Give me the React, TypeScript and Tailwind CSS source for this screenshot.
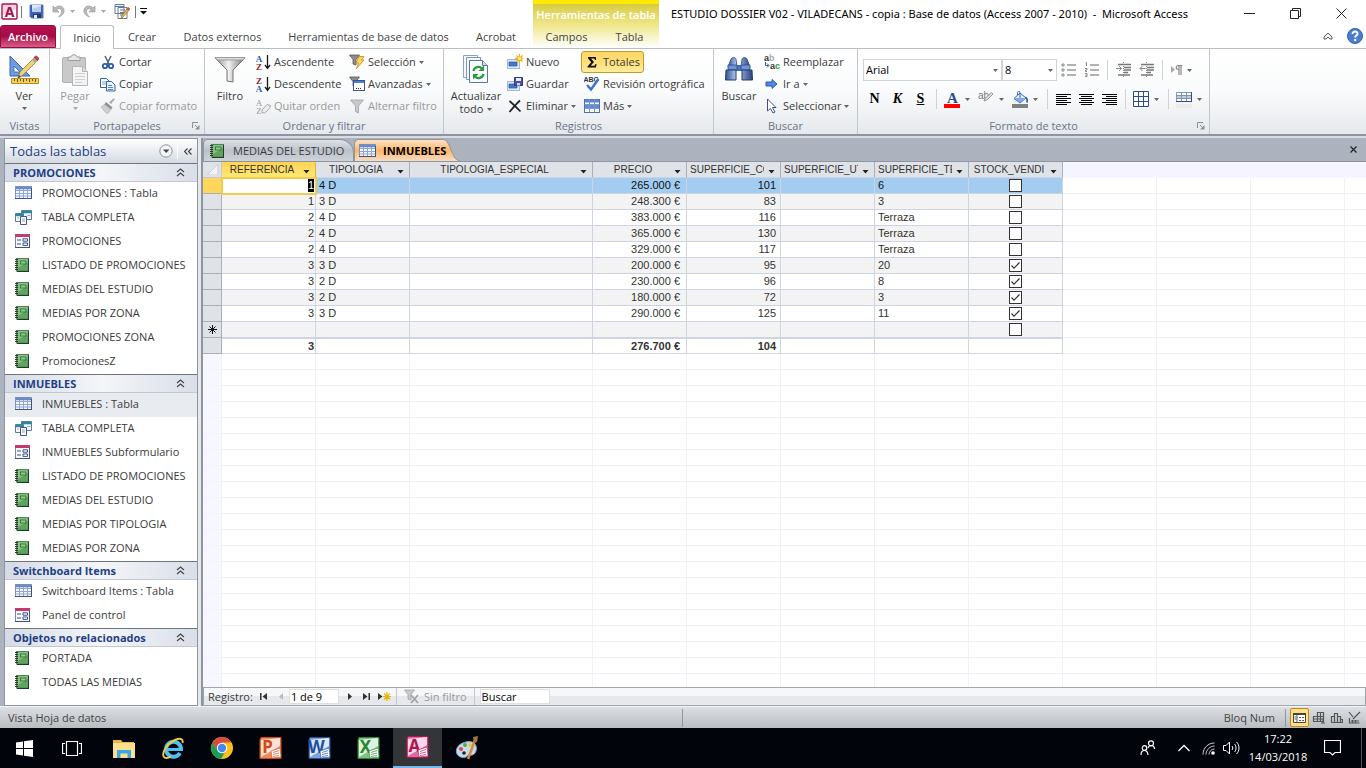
import type { ReactNode } from 'react';
import clsx from 'clsx';

type NavKind = 'table' | 'query' | 'form' | 'report';

interface NavGroup {
  title: string;
  items: { label: string; kind: NavKind; active?: boolean }[];
}

const navGroups: NavGroup[] = [
  {
    title: 'PROMOCIONES',
    items: [
      { label: 'PROMOCIONES : Tabla', kind: 'table' },
      { label: 'TABLA COMPLETA', kind: 'query' },
      { label: 'PROMOCIONES', kind: 'form' },
      { label: 'LISTADO DE PROMOCIONES', kind: 'report' },
      { label: 'MEDIAS DEL ESTUDIO', kind: 'report' },
      { label: 'MEDIAS POR ZONA', kind: 'report' },
      { label: 'PROMOCIONES ZONA', kind: 'report' },
      { label: 'PromocionesZ', kind: 'report' },
    ],
  },
  {
    title: 'INMUEBLES',
    items: [
      { label: 'INMUEBLES : Tabla', kind: 'table', active: true },
      { label: 'TABLA COMPLETA', kind: 'query' },
      { label: 'INMUEBLES Subformulario', kind: 'form' },
      { label: 'LISTADO DE PROMOCIONES', kind: 'report' },
      { label: 'MEDIAS DEL ESTUDIO', kind: 'report' },
      { label: 'MEDIAS POR TIPOLOGIA', kind: 'report' },
      { label: 'MEDIAS POR ZONA', kind: 'report' },
    ],
  },
  {
    title: 'Switchboard Items',
    items: [
      { label: 'Switchboard Items : Tabla', kind: 'table' },
      { label: 'Panel de control', kind: 'form' },
    ],
  },
  {
    title: 'Objetos no relacionados',
    items: [
      { label: 'PORTADA', kind: 'report' },
      { label: 'TODAS LAS MEDIAS', kind: 'report' },
    ],
  },
];

const columns = [
  'REFERENCIA',
  'TIPOLOGIA',
  'TIPOLOGIA_ESPECIAL',
  'PRECIO',
  'SUPERFICIE_CO',
  'SUPERFICIE_UT',
  'SUPERFICIE_TE',
  'STOCK_VENDI',
];

const rows = [
  { ref: '1', tipo: '4 D', precio: '265.000 €', sup: '101', terraza: '6', vendido: false },
  { ref: '1', tipo: '3 D', precio: '248.300 €', sup: '83', terraza: '3', vendido: false },
  { ref: '2', tipo: '4 D', precio: '383.000 €', sup: '116', terraza: 'Terraza', vendido: false },
  { ref: '2', tipo: '4 D', precio: '365.000 €', sup: '130', terraza: 'Terraza', vendido: false },
  { ref: '2', tipo: '4 D', precio: '329.000 €', sup: '117', terraza: 'Terraza', vendido: false },
  { ref: '3', tipo: '3 D', precio: '200.000 €', sup: '95', terraza: '20', vendido: true },
  { ref: '3', tipo: '2 D', precio: '230.000 €', sup: '96', terraza: '8', vendido: true },
  { ref: '3', tipo: '2 D', precio: '180.000 €', sup: '72', terraza: '3', vendido: true },
  { ref: '3', tipo: '3 D', precio: '290.000 €', sup: '125', terraza: '11', vendido: true },
];

/* ---------- icons ---------- */

interface SvgProps {
  w?: number;
  h?: number;
  box?: string;
  className?: string;
  children: ReactNode;
}

const Svg = ({ w = 16, h = 16, box, className, children }: SvgProps) => (
  <svg width={w} height={h} viewBox={box ?? `0 0 ${w} ${h}`} className={clsx('shrink-0', className)} aria-hidden="true">
    {children}
  </svg>
);

const Caret = ({ className = 'fill-[#666]' }: { className?: string }) => (
  <Svg w={5} h={3} className={className}>
    <path d="M0 0h5L2.5 3z" />
  </Svg>
);

const AccessIcon = () => (
  <Svg w={17} h={17}>
    <rect x="1" y="1" width="15" height="15" rx="1" fill="#fff" stroke="#a4104b" strokeWidth="1.4" />
    <path d="M2 2h13v4L2 12z" fill="#f3d3df" />
    <text x="8.5" y="14" fontSize="14" fontWeight="700" textAnchor="middle" fill="#a4104b" fontFamily="Noto Sans, sans-serif">A</text>
  </Svg>
);

const SaveIcon = () => (
  <Svg w={15} h={15}>
    <path d="M1 1h13v13H2.500L1 12.500z" fill="#3f5fb4" stroke="#5a78c4" />
    <path d="M3 1h9v7H3z" fill="#dfe7f8" />
    <path d="M3 5l9-3v6H3z" fill="#b9cbef" />
    <path d="M4 10h8v4H4z" fill="#25386e" />
    <path d="M5 11h3v3H5z" fill="#e9edf7" />
  </Svg>
);

const UndoIcon = ({ flip }: { flip?: boolean }) => (
  <Svg w={13} h={13} className={flip ? '-scale-x-100' : undefined}>
    <path d="M1 1v6h6L4.800 4.800C7 2.500 10 4 9.500 7 9.200 9 8 10.500 6.500 12c4-1.500 6-4 5.500-7.200C11.400.8 6.500-.5 3 3z" fill="#b9b9b9" stroke="#9b9b9b" strokeWidth=".7" />
  </Svg>
);

const FormEditIcon = () => (
  <Svg w={17} h={16}>
    <path d="M1 .5h9v9H1zM4 3.500h9v11H4z" fill="#fff" stroke="#6b7a95" />
    <path d="M1 2.500h9M6 6h5M6 8.500h5M6 11h3" stroke="#5674ad" />
    <path d="M16 5l-7 8-2 2 .5-3 6.500-8.500z" fill="#eeb54a" stroke="#9b6a18" strokeWidth=".7" />
    <path d="M14 3.500L16 5l-1.500 1.700-2-1.600z" fill="#c75050" />
  </Svg>
);

const ViewIcon = () => (
  <Svg w={32} h={30}>
    <path d="M2 1v20h20z" fill="#6f9be0" stroke="#3765b8" />
    <path d="M6 11v6h6z" fill="#fff" stroke="#3765b8" strokeWidth=".8" />
    <path d="M27 2l3 3-15 15-5 3 2-6z" fill="#f3d277" stroke="#8a7748" strokeWidth=".8" />
    <path d="M11 20l2 2-3 1z" fill="#444" />
    <path d="M26 2.500l3.500 3.200 1-1.300c.8-1.300-1.900-4-3.200-3.200z" fill="#c4452e" stroke="#87301f" strokeWidth=".6" />
    <path d="M24 4.800l3.200 3.200 1.800-2-3.200-3z" fill="#9aa" />
    <path d="M3.500 23.500h27v5h-27z" fill="#f6cf58" stroke="#b98b1a" />
    <path d="M6.500 24v2m3-2v3m3-3v2m3-2v3m3-3v2m3-2v3m3-3v2m3-2v3" stroke="#6e5413" />
  </Svg>
);

const PasteIcon = () => (
  <Svg w={28} h={32}>
    <rect x="1.500" y="3.500" width="23" height="25" rx="1.500" fill="#c9c9c9" stroke="#b0b0b0" />
    <path d="M7 6.500V3h3c0-3 6-3 6 0h3v3.500z" fill="#e6e6e6" stroke="#9c9c9c" />
    <path d="M11.500 12.500h10l5 5v14h-15z" fill="#f4f4f6" stroke="#b5b5b8" />
    <path d="M21.500 12.500v5h5" fill="#ddd" stroke="#b5b5b8" />
    <path d="M14 19.500h10M14 22.500h10M14 25.500h10M14 28.500h7" stroke="#cfcfd3" />
  </Svg>
);

const CutIcon = () => (
  <Svg>
    <path d="M5 2l4.500 9M11 2L6.500 11" stroke="#52607b" strokeWidth="1.500" />
    <circle cx="5" cy="12" r="2.200" fill="none" stroke="#2b5caa" strokeWidth="1.800" />
    <circle cx="11" cy="12" r="2.200" fill="none" stroke="#2b5caa" strokeWidth="1.800" />
  </Svg>
);

const CopyIcon = () => (
  <Svg>
    <path d="M.5 2.500h6l3 3v6h-9z" fill="#fff" stroke="#2f63ac" />
    <path d="M2 6h4M2 8h4" stroke="#7ba2d8" />
    <path d="M6.500 5.500h5l3.500 3.500v6H6.500z" fill="#eaf2fd" stroke="#2f63ac" />
    <path d="M8 9.500h4M8 11.500h5M8 13.500h5" stroke="#5686c9" />
  </Svg>
);

const BrushIcon = () => (
  <Svg>
    <path d="M15 1l-4 5-2-1.500L13.500.5z" fill="#a9a9a9" />
    <path d="M6 4l6.500 5.500-2 2.500-6.500-5z" fill="#8f8f8f" />
    <path d="M4.500 6.500l6.500 5-3 4-2.500-1L1 9z" fill="#cfcfcf" stroke="#b1b1b1" strokeWidth=".7" />
  </Svg>
);

const FunnelBig = () => (
  <Svg w={32} h={28}>
    <defs>
      <linearGradient id="funnel" x1="0" x2="1">
        <stop offset="0" stopColor="#8b8b8b" />
        <stop offset=".45" stopColor="#f1f1f1" />
        <stop offset="1" stopColor="#777" />
      </linearGradient>
    </defs>
    <path d="M1 2h30L19 14v12l-6-1V14z" fill="url(#funnel)" stroke="#727272" />
    <path d="M1 1.500h30L29 4H3z" fill="#d9d9d9" stroke="#8b8b8b" strokeWidth=".7" />
  </Svg>
);

const SortIcon = ({ top, bottom }: { top: string; bottom: string }) => (
  <Svg>
    <text x="4" y="7.500" fontSize="9" fontWeight="700" textAnchor="middle" fill={top === 'A' ? '#2b5caa' : '#8b2a2a'} fontFamily="Liberation Serif, serif">{top}</text>
    <text x="4" y="15.500" fontSize="9" fontWeight="700" textAnchor="middle" fill={bottom === 'A' ? '#2b5caa' : '#8b2a2a'} fontFamily="Liberation Serif, serif">{bottom}</text>
    <path d="M12.500 1v13M10 11l2.500 3.500L15 11" fill="none" stroke="#1b1b1b" strokeWidth="1.300" />
  </Svg>
);

const ClearSortIcon = () => (
  <Svg>
    <text x="4" y="7.500" fontSize="9" textAnchor="middle" fill="#999" fontFamily="Liberation Serif, serif">A</text>
    <text x="4" y="15.500" fontSize="9" textAnchor="middle" fill="#999" fontFamily="Liberation Serif, serif">Z</text>
    <path d="M7 12l5-5.500 3.500 1-1 3-5 4.500-2.500-.5z" fill="#eee" stroke="#a6a6a6" />
  </Svg>
);

const Funnel = ({ extra, light }: { extra?: 'bolt' | 'form' | 'x'; light?: boolean }) => (
  <Svg>
    <path
      d={extra ? 'M.5 1h10L7 5.500V11l-3-1V5.500z' : 'M1.500 2h13L9.500 8v7l-3-1.500V8z'}
      fill={light ? '#c9c9c9' : '#8d8d8d'}
      stroke={light ? '#a3a3a3' : '#555'}
      strokeWidth=".8"
    />
    {extra === 'bolt' && <path d="M10 2.500h5L12.500 6H15l-7.500 8.500 2-5.500H7z" fill="#ffd45a" stroke="#c08a1a" strokeWidth=".8" />}
    {extra === 'form' && (
      <g>
        <rect x="4.500" y="4.500" width="11" height="10" fill="#fff" stroke="#39598f" />
        <path d="M5 6h10" stroke="#4c7fcf" strokeWidth="2" />
        <path d="M7 12.500h1m1 0h1m1 0h1" stroke="#333" />
      </g>
    )}
    {extra === 'x' && <path d="M7 6l7 8M14 6l-7 8" stroke="#a3a3a3" strokeWidth="1.800" />}
  </Svg>
);

const RefreshAllIcon = () => (
  <Svg w={28} h={32}>
    <path d="M1.500 1.500h14v22h-14z" fill="#f4f8fd" stroke="#8ba3c4" />
    <path d="M4.500 3.500h14v22h-14z" fill="#f4f8fd" stroke="#7f98bb" />
    <path d="M7.500 6.500h13l5 5v17h-18z" fill="#f7fafe" stroke="#5c7799" />
    <path d="M20.500 6.500v5h5" fill="#cfdcec" stroke="#5c7799" />
    <path d="M11.500 17c.5-4 6-5.500 8.500-2.500M21.500 20c-.5 4-6 5.500-8.500 2.500" fill="none" stroke="#2f9a3f" strokeWidth="2.200" />
    <path d="M22 11.500v5.500h-5.500zM11 25.500V20h5.500z" fill="#2f9a3f" />
  </Svg>
);

const RecordIcon = ({ kind }: { kind: 'new' | 'save' }) => (
  <Svg>
    <rect x=".5" y="5.500" width="12" height="9" fill="#dfe9f7" stroke="#a5b7d3" />
    <path d="M2 8h8v4H2z" fill="#3f7bd0" stroke="#27549b" strokeWidth=".7" />
    {kind === 'new' && (
      <g stroke="#f0b400" strokeWidth="1.300">
        <path d="M12.500 0v9M8 4.500h8M9.500 1.500l6 6M15.500 1.500l-6 6" />
        <circle cx="12.500" cy="4.500" r="1.500" fill="#fff6b0" stroke="none" />
      </g>
    )}
    {kind === 'save' && (
      <g>
        <path d="M7.500 1.500h8v8h-8z" fill="#4a54a8" stroke="#32397f" />
        <path d="M9 2h5v3H9z" fill="#e8edf9" />
        <path d="M10 7h3v2.500h-3z" fill="#d5d8ea" />
      </g>
    )}
  </Svg>
);

const DeleteIcon = () => (
  <Svg>
    <path d="M2.500 3C6 6 10 10 13.500 13.500M13 2.500C9 6 6 10 2.500 14" fill="none" stroke="#222" strokeWidth="1.700" />
  </Svg>
);

const SigmaIcon = () => (
  <Svg>
    <path d="M4 3h8v3h-1l-.8-1.500H7L10 8l-3.300 3.800h3.800L11.500 10h1l-.5 3.500H3.500v-1L7.200 8.300 4 4.200z" fill="#111" />
  </Svg>
);

const SpellIcon = () => (
  <Svg>
    <text x="7" y="6" fontSize="7" fontWeight="700" textAnchor="middle" fill="#333" fontFamily="Liberation Sans, sans-serif">ABC</text>
    <path d="M3 9l4 4.500L14.500 3" fill="none" stroke="#3c74cf" strokeWidth="2.400" />
  </Svg>
);

const MoreIcon = () => (
  <Svg>
    <rect x=".5" y="1.500" width="15" height="13" fill="#fff" stroke="#4d6ea8" />
    <path d="M1 3h14" stroke="#5a86cf" strokeWidth="3" />
    <path d="M1 8.500h14" stroke="#5a8fe0" strokeWidth="4" />
    <path d="M.5 6.500h15M.5 10.500h15M5.500 1.500v13M10.500 1.500v13" stroke="#7c97c4" />
  </Svg>
);

const BinocularsIcon = () => (
  <Svg w={30} h={28}>
    <defs>
      <linearGradient id="bino" x1="0" x2="1">
        <stop offset="0" stopColor="#2f4f8f" />
        <stop offset=".4" stopColor="#b9cdf0" />
        <stop offset="1" stopColor="#27427c" />
      </linearGradient>
    </defs>
    <path d="M7 3c1-2 4-2 5 0l1 8H4zM18 3c1-2 4-2 5 0l3 8h-9z" fill="url(#bino)" stroke="#2d4a85" strokeWidth=".8" />
    <path d="M12 9h6v6h-6z" fill="#4a6fb5" />
    <path d="M4 9h9v5H4zM17 9h9v5h-9z" fill="#6f93d6" stroke="#2d4a85" strokeWidth=".8" />
    <path d="M2 14h10v10H1.500zM18 14h10l.5 10H18z" fill="url(#bino)" stroke="#233c70" />
  </Svg>
);

const ReplaceIcon = () => (
  <Svg>
    <text x="0" y="7" fontSize="9" fontWeight="700" fill="#333" fontFamily="Liberation Sans, sans-serif">a<tspan fill="#aaa">b</tspan></text>
    <text x="6" y="14.500" fontSize="9" fontWeight="700" fill="#333" fontFamily="Liberation Sans, sans-serif">a<tspan fill="#2b9a2b">c</tspan></text>
    <path d="M1.500 8v3.500h3M3 9.500l2 2-2 2" fill="none" stroke="#2b5caa" />
  </Svg>
);

const ArrowIcon = () => (
  <Svg>
    <path d="M2 6h6V3.500l5 4.500-5 4.500V10H2z" fill="#4f88e6" stroke="#2c5cab" />
  </Svg>
);

const PointerIcon = () => (
  <Svg>
    <path d="M3.500 1v12l3-2.500L9 15l2-1-2.500-4.500H12z" fill="#fff" stroke="#3c5384" />
  </Svg>
);

const ListIcon = ({ numbered }: { numbered?: boolean }) => (
  <Svg>
    <path d="M6 3h9M6 8h9M6 13h9" stroke="#999" strokeWidth="1.300" />
    {numbered ? (
      <path d="M1.500 1l1-.5V4M1 6.500h2v1.500H1.500V9.500H3M1 11.500h2v3H1M1.500 13H3" fill="none" stroke="#8a8a8a" />
    ) : (
      <path d="M1 2h2v2H1zM1 7h2v2H1zM1 12h2v2H1z" fill="#fff" stroke="#8a8a8a" />
    )}
  </Svg>
);

const IndentIcon = ({ out }: { out?: boolean }) => (
  <Svg>
    <path d="M2 2.500h13M8 5.500h7M8 8h7M8 10.500h4M2 13h12" stroke="#777" strokeWidth="1.300" />
    <path d={out ? 'M6.500 6.500H1M3.500 4L1 6.500 3.500 9' : 'M0 6.500h5.500M3 4l2.500 2.500L3 9'} fill="none" stroke="#888" />
    <path d="M7.500 0v15" stroke="#888" strokeDasharray="1 1" />
  </Svg>
);

const PilcrowIcon = () => (
  <Svg w={13} h={14}>
    <path d="M1 3l4 3.500L1 10z" fill="#aaa" />
    <path d="M12.500 2.500H8.500c-3 0-3 4 0 4M9 3v9M11 3v9" fill="none" stroke="#888" strokeWidth="1.200" />
  </Svg>
);

const AlignIcon = ({ d }: { d: string }) => (
  <Svg w={15} h={13}>
    <path d={d} stroke="#000" strokeWidth="1" />
  </Svg>
);

const FontColorIcon = () => (
  <Svg w={17} h={17}>
    <text x="8.500" y="11.500" fontSize="15" fontWeight="700" textAnchor="middle" fill="#2c4d8b" fontFamily="Liberation Serif, serif">A</text>
    <path d="M0 13h16v4H0z" fill="#f00" />
  </Svg>
);

const HighlightIcon = () => (
  <Svg w={17} h={17}>
    <text x="0" y="8" fontSize="10" fontWeight="400" fill="#777" fontFamily="Liberation Sans, sans-serif">ab</text>
    <path d="M15 3l-6 6-3 1 1-2.500 6.500-6z" fill="#ddd" stroke="#999" />
  </Svg>
);

const FillIcon = () => (
  <Svg w={17} h={17}>
    <path d="M8 2l6 5-6 5-6-4.500z" fill="#e3edfb" stroke="#3a67ab" />
    <path d="M4 7h9l-5 4.500-5-4z" fill="#7fa8e6" />
    <path d="M8 7V1.500c0-1.500-2.500-1.500-2.500 0V4" fill="none" stroke="#3a67ab" />
    <path d="M13.500 6c2 2 2 4 1.200 5.500" fill="none" stroke="#2b5caa" strokeWidth="1.600" />
    <path d="M0 13h16v4H0z" fill="#808080" />
  </Svg>
);

const GridIcon = () => (
  <Svg w={17} h={17}>
    <path d="M.5.5h15v15H.5zM.5 5.500h15M.5 10.500h15M5.500.5v15M10.500.5v15" fill="#fff" stroke="#2c4d8b" />
  </Svg>
);

const AltRowIcon = () => (
  <Svg w={17} h={17}>
    <path d="M.5 1.500h15v9H.5z" fill="#fff" stroke="#8195b3" />
    <path d="M1 4.500h14v3H1z" fill="#c5cbd5" />
    <path d="M.5 4.500h15M.5 7.500h15M5.500 1.500v9M10.500 1.500v9" stroke="#8195b3" />
    <path d="M15.500 1v10M0 10.500h16" stroke="#2c4d8b" />
    <path d="M0 13h16v4H0z" fill="#ececec" />
  </Svg>
);

const TableIcon = () => (
  <Svg w={17} h={14}>
    <rect x=".5" y=".5" width="16" height="12" fill="#f4f7fd" stroke="#7e91b6" />
    <path d="M1 2h15" stroke="#6c8ac8" strokeWidth="2.500" />
    <path d="M1 4.500h15M1 7.500h15M1 10h15M4.500 3v9.500M8.500 3v9.500M12.500 3v9.500" stroke="#93a7cc" />
    <path d="M0 12.500h17M16.500 2v11" stroke="#3c5384" />
  </Svg>
);

const QueryIcon = () => (
  <Svg w={17} h={15}>
    <path d="M6.500.5h10v9h-10z" fill="#eef5fb" stroke="#5f7ba0" />
    <path d="M6.500 2h10" stroke="#2b8a93" strokeWidth="2.500" />
    <path d="M.5 3.500h8v8h-8z" fill="#fff" stroke="#5f7ba0" />
    <path d="M.5 5h8" stroke="#2b8a93" strokeWidth="2.500" />
    <path d="M5.500 6.500h6v8h-6z" fill="#fff" stroke="#41597f" />
    <path d="M7 9h3M7 11h3M2 8h2M12.500 5.500h3" stroke="#8ba2c6" />
  </Svg>
);

const FormIcon = () => (
  <Svg w={16} h={15}>
    <rect x=".5" y=".5" width="14" height="13" fill="#f6f8fd" stroke="#7484ad" />
    <path d="M0 1.500h15" stroke="#c43b6b" strokeWidth="3" />
    <path d="M2 6h4M2 10h4" stroke="#3c5384" strokeWidth="1.200" />
    <path d="M8 4.800h4.500v2.400H8zM8 9h4.500v2.400H8z" fill="#fff" stroke="#3c5384" />
    <path d="M0 13.500h15M14.500 3v11" stroke="#3c5384" />
  </Svg>
);

const ReportIcon = () => (
  <Svg w={14} h={14}>
    <rect x="1.500" y=".5" width="12" height="12.500" fill="#5fa35e" stroke="#4c8550" />
    <path d="M3 1h10v3L3 10z" fill="#86c083" />
    <rect x="5.500" y="3" width="5.500" height="3" fill="#8fcb8a" stroke="#2d6a37" strokeWidth=".8" />
    <path d="M0 1.500h3M0 3.500h3M0 5.500h3M0 7.500h3M0 9.500h3M0 11.500h3" stroke="#333" />
    <path d="M2 13.500h12M13.500 1v13" stroke="#1f3d26" />
  </Svg>
);

const navIcons: Record<NavKind, ReactNode> = {
  table: <TableIcon />,
  query: <QueryIcon />,
  form: <FormIcon />,
  report: <ReportIcon />,
};

/* ---------- ribbon ---------- */

interface RibbonButtonProps {
  icon: ReactNode;
  label: string;
  caret?: boolean;
  disabled?: boolean;
  active?: boolean;
}

const RibbonButton = ({ icon, label, caret, disabled, active }: RibbonButtonProps) => (
  <button
    type="button"
    disabled={disabled}
    className={clsx(
      'flex h-[22px] items-center gap-[3px] rounded-[3px] border px-[2px] whitespace-nowrap',
      active ? 'border-[#c29b29] bg-linear-to-b from-[#ffd666] via-[#ffdf78] to-[#ffec9c] pr-[3px]' : 'border-transparent',
      disabled ? 'text-[#9a9a9a]' : 'text-[#3b3b3b]'
    )}
  >
    {icon}
    <span>{label}</span>
    {caret && <Caret />}
  </button>
);

const BigButton = ({ icon, children, disabled, width = 'w-11' }: { icon: ReactNode; children: ReactNode; disabled?: boolean; width?: string }) => (
  <button
    type="button"
    disabled={disabled}
    className={clsx('flex h-[66px] shrink-0 flex-col items-center', width, disabled ? 'text-[#9a9a9a]' : 'text-[#3b3b3b]')}
  >
    <span className="flex h-[38px] items-center">{icon}</span>
    {children}
  </button>
);

const Launcher = () => (
  <Svg w={8} h={8} className="absolute right-1 bottom-1">
    <path d="M.5 6V.5H6" fill="none" stroke="#8a8f98" />
    <path d="M3 3l3 3" stroke="#8a8f98" />
    <path d="M7.500 3v4.500H3z" fill="#8a8f98" />
  </Svg>
);

const Group = ({ title, width, launcher, children }: { title: string; width: string; launcher?: boolean; children: ReactNode }) => (
  <section className={clsx('relative flex shrink-0 flex-col border-r border-[#c3c7cd]', width)} aria-label={title}>
    <div className="flex h-[69px] items-start pt-[2px]">{children}</div>
    <div className="text-center leading-4 text-[#6b7486]">{title}</div>
    {launcher && <Launcher />}
  </section>
);

const ToolSep = () => <span className="mx-1 h-5 w-px bg-[#cfd3d8]" />;

const ToolButton = ({ label, children, caret }: { label: string; children: ReactNode; caret?: boolean }) => (
  <button
    type="button"
    aria-label={label}
    className={clsx('flex h-[22px] items-center', caret ? 'w-[34px] gap-1 pl-[3px]' : 'w-[23px] justify-center')}
  >
    {children}
    {caret && <Caret />}
  </button>
);

const Combo = ({ label, value, width }: { label: string; value: string; width: string }) => (
  <div className={clsx('relative flex h-[22px] items-center', width)}>
    <select
      aria-label={label}
      defaultValue={value}
      className="h-full w-full appearance-none border border-[#d0d3d9] bg-white pl-[2px] text-black"
    >
      <option>{value}</option>
    </select>
    <span className="pointer-events-none absolute right-1">
      <Caret />
    </span>
  </div>
);

const Ribbon = () => (
  <div className="flex h-[88px] shrink-0 border-t border-b-2 border-t-[#b9bfc7] border-b-[#8e959e] bg-linear-to-b from-white via-[#fafbfc] to-[#e5e8ec]">
    <Group title="Vistas" width="w-[50px]">
      <BigButton icon={<ViewIcon />} width="w-12">
        <span className="leading-[14px]">Ver</span>
        <Caret className="mt-1 fill-[#666]" />
      </BigButton>
    </Group>
    <Group title="Portapapeles" width="w-[155px]" launcher>
      <div className="flex pl-[3px]">
        <BigButton icon={<PasteIcon />} disabled>
          <span className="leading-[14px]">Pegar</span>
          <Caret className="mt-1 fill-[#aaa]" />
        </BigButton>
        <div className="flex flex-col items-start">
          <RibbonButton icon={<CutIcon />} label="Cortar" />
          <RibbonButton icon={<CopyIcon />} label="Copiar" />
          <RibbonButton icon={<BrushIcon />} label="Copiar formato" disabled />
        </div>
      </div>
    </Group>
    <Group title="Ordenar y filtrar" width="w-[239px]">
      <div className="flex pl-[3px]">
        <BigButton icon={<FunnelBig />}>
          <span className="leading-[14px]">Filtro</span>
        </BigButton>
        <div className="flex w-[94px] flex-col items-start">
          <RibbonButton icon={<SortIcon top="A" bottom="Z" />} label="Ascendente" />
          <RibbonButton icon={<SortIcon top="Z" bottom="A" />} label="Descendente" />
          <RibbonButton icon={<ClearSortIcon />} label="Quitar orden" disabled />
        </div>
        <div className="flex flex-col items-start">
          <RibbonButton icon={<Funnel extra="bolt" />} label="Selección" caret />
          <RibbonButton icon={<Funnel extra="form" />} label="Avanzadas" caret />
          <RibbonButton icon={<Funnel light />} label="Alternar filtro" disabled />
        </div>
      </div>
    </Group>
    <Group title="Registros" width="w-[270px]">
      <div className="flex pl-1">
        <BigButton icon={<RefreshAllIcon />} width="w-14">
          <span className="leading-[14px]">Actualizar</span>
          <span className="flex items-center gap-1 leading-3">
            todo <Caret />
          </span>
        </BigButton>
        <div className="flex w-[77px] flex-col items-start">
          <RibbonButton icon={<RecordIcon kind="new" />} label="Nuevo" />
          <RibbonButton icon={<RecordIcon kind="save" />} label="Guardar" />
          <RibbonButton icon={<DeleteIcon />} label="Eliminar" caret />
        </div>
        <div className="flex flex-col items-start">
          <RibbonButton icon={<SigmaIcon />} label="Totales" active />
          <RibbonButton icon={<SpellIcon />} label="Revisión ortográfica" />
          <RibbonButton icon={<MoreIcon />} label="Más" caret />
        </div>
      </div>
    </Group>
    <Group title="Buscar" width="w-[144px]">
      <div className="flex pl-[3px]">
        <BigButton icon={<BinocularsIcon />}>
          <span className="leading-[14px]">Buscar</span>
        </BigButton>
        <div className="flex flex-col items-start">
          <RibbonButton icon={<ReplaceIcon />} label="Reemplazar" />
          <RibbonButton icon={<ArrowIcon />} label="Ir a" caret />
          <RibbonButton icon={<PointerIcon />} label="Seleccionar" caret />
        </div>
      </div>
    </Group>
    <Group title="Formato de texto" width="w-[352px]" launcher>
      <div className="flex flex-col gap-[7px] pt-2 pl-[5px]">
        <div className="flex items-center">
          <Combo label="Fuente" value="Arial" width="w-[139px]" />
          <Combo label="Tamaño de fuente" value="8" width="w-[55px]" />
          <ToolButton label="Viñetas"><ListIcon /></ToolButton>
          <ToolButton label="Numeración"><ListIcon numbered /></ToolButton>
          <ToolSep />
          <ToolButton label="Aumentar sangría"><IndentIcon /></ToolButton>
          <ToolButton label="Disminuir sangría"><IndentIcon out /></ToolButton>
          <ToolSep />
          <ToolButton label="Dirección del texto" caret><PilcrowIcon /></ToolButton>
        </div>
        <div className="flex items-center font-['Liberation_Serif',serif] text-[14px] font-bold text-black">
          <ToolButton label="Negrita">N</ToolButton>
          <ToolButton label="Cursiva"><i>K</i></ToolButton>
          <ToolButton label="Subrayado"><u>S</u></ToolButton>
          <ToolSep />
          <ToolButton label="Color de fuente" caret><FontColorIcon /></ToolButton>
          <ToolButton label="Color de resaltado" caret><HighlightIcon /></ToolButton>
          <ToolButton label="Color de fondo" caret><FillIcon /></ToolButton>
          <ToolSep />
          <ToolButton label="Alinear a la izquierda"><AlignIcon d="M0 1.500h15M0 3.500h11M0 5.500h15M0 7.500h11M0 9.500h15M0 11.500h11" /></ToolButton>
          <ToolButton label="Centrar"><AlignIcon d="M0 1.500h15M2 3.500h11M0 5.500h15M2 7.500h11M0 9.500h15M2 11.500h11" /></ToolButton>
          <ToolButton label="Alinear a la derecha"><AlignIcon d="M0 1.500h15M4 3.500h11M0 5.500h15M4 7.500h11M0 9.500h15M4 11.500h11" /></ToolButton>
          <ToolSep />
          <ToolButton label="Líneas de cuadrícula" caret><GridIcon /></ToolButton>
          <ToolSep />
          <ToolButton label="Color de fila alternativo" caret><AltRowIcon /></ToolButton>
        </div>
      </div>
    </Group>
  </div>
);

const ribbonTabs = [
  { label: 'Crear', width: 'w-14' },
  { label: 'Datos externos', width: 'w-[105px]' },
  { label: 'Herramientas de base de datos', width: 'w-[187px]' },
  { label: 'Acrobat', width: 'w-[68px]' },
];

const Header = () => (
  <header className="flex h-12 shrink-0 bg-white">
    <div className="flex w-[533px] shrink-0 flex-col">
      <div className="flex h-[23px] items-center pl-px">
        <AccessIcon />
        <span className="mx-[3px] h-3 w-px bg-[#777]" />
        <div className="flex items-center pl-1">
          <button type="button" aria-label="Guardar" className="w-[23px]"><SaveIcon /></button>
          <button type="button" aria-label="Deshacer" className="flex w-[31px] items-center gap-[5px]"><UndoIcon /><Caret className="fill-[#aaa]" /></button>
          <button type="button" aria-label="Rehacer" className="flex w-[31px] items-center gap-[5px]"><UndoIcon flip /><Caret className="fill-[#aaa]" /></button>
          <button type="button" aria-label="Modo de formulario"><FormEditIcon /></button>
        </div>
        <span className="mx-1 h-3 w-px bg-[#777]" />
        <Svg w={7} h={7}>
          <path d="M0 .5h7" stroke="#111" />
          <path d="M0 3h7L3.500 6.500z" fill="#111" />
        </Svg>
      </div>
      <nav className="mt-[2px] flex h-[23px] text-[#444]">
        <button type="button" className="w-14 rounded-t-[3px] border border-[#8e0f40] bg-linear-to-b from-[#b5124f] via-[#a80a47] to-[#dc5b8a] font-semibold text-white">
          Archivo
        </button>
        <button type="button" className="z-10 -mb-px ml-1 w-[54px] rounded-t-[3px] border border-b-0 border-[#b9bfc7] bg-white">
          Inicio
        </button>
        {ribbonTabs.map((tab) => (
          <button key={tab.label} type="button" className={clsx('whitespace-nowrap', tab.width)}>
            {tab.label}
          </button>
        ))}
      </nav>
    </div>
    <div className="flex w-[126px] shrink-0 flex-col border-t-4 border-[#fdea00] bg-linear-to-b from-[#d9cb3c] via-[#f0e88e] to-white">
      <div className="h-[21px] text-center leading-[22px] font-semibold whitespace-nowrap text-white">Herramientas de tabla</div>
      <div className="flex h-[23px] text-[#444]">
        <button type="button" className="w-[67px]">Campos</button>
        <button type="button" className="w-[59px]">Tabla</button>
      </div>
    </div>
    <div className="flex min-w-0 flex-1 flex-col pl-3">
      <div className="flex h-[27px] items-center justify-between pr-[2px] text-black">
        <h1 className="font-['Noto_Sans',sans-serif] whitespace-nowrap">ESTUDIO DOSSIER V02 - VILADECANS - copia : Base de datos (Access 2007 - 2010)&nbsp; -&nbsp; Microsoft Access</h1>
        <div className="flex">
          <button type="button" aria-label="Minimizar" className="flex w-[46px] justify-center">
            <Svg w={11} h={11}><path d="M0 5.500h11" stroke="#222" /></Svg>
          </button>
          <button type="button" aria-label="Restaurar" className="flex w-[46px] justify-center">
            <Svg w={11} h={11}><path d="M.5 2.500h8v8h-8zM2.500 2V.5h8v8H9" fill="none" stroke="#222" /></Svg>
          </button>
          <button type="button" aria-label="Cerrar" className="flex w-[46px] justify-center">
            <Svg w={11} h={11}><path d="M.5.5l10 10M10.500.5l-10 10" stroke="#222" /></Svg>
          </button>
        </div>
      </div>
      <div className="flex h-[18px] items-center justify-end gap-[14px] pr-[3px]">
        <button type="button" aria-label="Minimizar cinta">
          <Svg w={10} h={8}><path d="M1 5l4-4 4 4v2H7L5 5 3 7H1z" fill="#fff" stroke="#555" /></Svg>
        </button>
        <button type="button" aria-label="Ayuda">
          <Svg w={16} h={16}>
            <circle cx="8" cy="8" r="7.500" fill="#4b7ed0" stroke="#2f5fae" />
            <path d="M5.500 6c0-3.500 5.500-3 5 0-.2 1.500-2.300 1.800-2.300 3.500" fill="none" stroke="#fff" strokeWidth="1.900" />
            <circle cx="8.200" cy="12" r="1.200" fill="#fff" />
          </Svg>
        </button>
      </div>
    </div>
  </header>
);

/* ---------- navigation pane ---------- */

const NavigationPane = () => (
  <aside className="flex w-[194px] shrink-0 flex-col overflow-hidden border border-[#8e959e] bg-white text-[#3b3b3b]">
    <div className="flex h-[25px] shrink-0 items-center border-b border-[#6f757d] bg-linear-to-b from-white to-[#d5dae2] pl-[5px]">
      <span className="flex-1 text-[13px] text-[#1e4087]">Todas las tablas</span>
      <button type="button" aria-label="Filtrar objetos" className="mr-1">
        <Svg w={14} h={14}>
          <circle cx="7" cy="7" r="6.200" fill="#f4f5f7" stroke="#8a8f98" />
          <path d="M4 5.500h6.500L7.200 9z" fill="#444" />
        </Svg>
      </button>
      <button type="button" aria-label="Contraer panel" className="flex h-4 w-5 items-center justify-center border-l border-white">
        <Svg w={8} h={7}><path d="M3.500.5l-3 3 3 3M7.500.5l-3 3 3 3" fill="none" stroke="#444" strokeWidth="1.200" /></Svg>
      </button>
    </div>
    {navGroups.map((group, i) => (
      <section key={group.title}>
        <h2
          className={clsx(
            'flex items-center justify-between border-b border-[#c3c8d0] bg-linear-to-r from-[#d5dbe6] via-[#f4f6f8] to-[#d9dee9] pr-3 pl-2 font-bold text-[#1e4087]',
            i > 0 ? 'h-[19px] border-t border-t-[#6f757d]' : 'h-[18px]'
          )}
        >
          {group.title}
          <Svg w={9} h={9}><path d="M1 4l3.500-3L8 4M1 8l3.500-3L8 8" fill="none" stroke="#444" strokeWidth="1.200" /></Svg>
        </h2>
        <ul>
          {group.items.map((item, j) => (
            <li key={j}>
              <button type="button" className={clsx('flex h-6 w-full items-center pb-0.5 pl-[10px]', item.active && 'bg-[#e8ebef]')}>
                <span className="w-[27px]">{navIcons[item.kind]}</span>
                <span className="whitespace-nowrap">{item.label}</span>
              </button>
            </li>
          ))}
        </ul>
      </section>
    ))}
  </aside>
);

/* ---------- datasheet ---------- */

const TabTail = ({ id, stops }: { id: string; stops: [string, string, string] }) => (
  <Svg w={17} h={22} className="-ml-px">
    <defs>
      <linearGradient id={id} x1="0" y1="0" x2="0" y2="1">
        <stop offset="0" stopColor={stops[0]} />
        <stop offset=".5" stopColor={stops[1]} />
        <stop offset="1" stopColor={stops[2]} />
      </linearGradient>
    </defs>
    <path d="M0 .5C4 .5 6 6 9 13c2 5 4 8.500 8 9H0z" fill={`url(#${id})`} />
    <path d="M0 .5C4 .5 6 6 9 13c2 5 4 8.500 8 9" fill="none" stroke="#8e959e" />
  </Svg>
);

const DocumentTabs = () => (
  <div className="flex h-6 shrink-0 items-end justify-between border-b border-[#8e959e] pr-[7px]">
    <div className="flex">
      <button type="button" className="flex h-[22px] w-[151px] items-center rounded-tl-[5px] rounded-tr-[14px] border border-b-0 border-[#8e959e] bg-linear-to-b from-[#dfe2e6] via-[#bdc2ca] to-[#cdd1d8] pl-[6px] text-[#3b3b3b]">
        <span className="w-[23px]"><ReportIcon /></span>
        <span className="whitespace-nowrap">MEDIAS DEL ESTUDIO</span>
      </button>
      <button type="button" className="flex h-[22px] text-black">
        <span className="flex h-full w-[90px] items-center rounded-tl-[5px] border-t border-l border-[#8e959e] bg-linear-to-b from-[#fde3c4] via-[#fdb768] to-[#f4dcc3] pl-1">
          <span className="w-6 shrink-0"><TableIcon /></span>
          <span className="relative z-10 font-bold">INMUEBLES</span>
        </span>
        <TabTail id="activeTail" stops={['#fde3c4', '#fdb768', '#f4dcc3']} />
      </button>
    </div>
    <button type="button" aria-label="Cerrar tabla" className="flex h-full w-[11px] items-center justify-center">
      <Svg w={7} h={7}><path d="M.5.5l6 6M6.500.5l-6 6" stroke="#222" strokeWidth="1.200" /></Svg>
    </button>
  </div>
);

const CheckCell = ({ label, checked }: { label: string; checked: boolean }) => (
  <span className="relative mx-auto flex size-[13px]">
    <input type="checkbox" aria-label={label} defaultChecked={checked} className="size-[13px] appearance-none border border-[#333] bg-white" />
    {checked && (
      <Svg w={13} h={13} className="pointer-events-none absolute inset-0">
        <path d="M2.500 6.500L5 9.200l5.500-5.700" fill="none" stroke="#333" strokeWidth="1.200" />
      </Svg>
    )}
  </span>
);

const cell = 'h-4 overflow-hidden border-r border-b border-[#cdd5e3] p-0 whitespace-nowrap';

const Selector = ({ current, children }: { current?: boolean; children?: ReactNode }) => (
  <td className={clsx('h-4 border-r border-b border-[#a9b0ba] p-0', current ? 'bg-[#ffd65c]' : 'bg-[#dfe2e7]')}>{children}</td>
);

const fillerWidths = ['w-[94px]', 'w-[94px]', 'w-[183px]', 'w-[94px]', 'w-[94px]', 'w-[94px]', 'w-[94px]', 'w-[94px]'];

const Datasheet = () => (
  <div className="flex min-h-0 flex-1 overflow-hidden bg-white bg-[repeating-linear-gradient(to_bottom,transparent_0,transparent_15px,#f0f1f5_15px,#f0f1f5_16px)] font-['Liberation_Sans',Arial,sans-serif] text-[11px] text-[#333]">
    <div className="flex shrink-0 flex-col">
      <table className="w-[860px] table-fixed border-separate border-spacing-0 bg-white leading-[15px]">
        <colgroup>
          <col className="w-[19px]" />
          {fillerWidths.map((width, i) => (
            <col key={i} className={width} />
          ))}
        </colgroup>
        <thead>
          <tr>
            <th className="h-4 border-r border-b border-[#c3c8d0] bg-[#dfe2e7] p-0" aria-label="Seleccionar todo">
              <Svg w={12} h={11} className="ml-1"><path d="M11 0v11H0z" fill="#f2f4f8" stroke="#c5ccd8" /></Svg>
            </th>
            {columns.map((name, i) => (
              <th
                key={name}
                scope="col"
                className={clsx(
                  'h-4 border-r border-b p-0 font-normal',
                  i === 0 ? 'border-[#e0b43c] bg-linear-to-b from-[#ffd452] to-[#ffe873]' : 'border-r-[#a9b0ba] border-b-[#cdd5e3] bg-[#dfe2e7]'
                )}
              >
                <div className="flex h-[15px] items-center pr-[5px] pl-[3px]">
                  <span className="min-w-0 flex-1 overflow-hidden text-center text-[10px]">{name}</span>
                  <button type="button" aria-label={`Filtrar ${name}`} className="flex w-[11px] justify-end pt-1">
                    <Svg w={7} h={4}><path d="M.5 0h6l-3 3.500z" fill="#222" /></Svg>
                  </button>
                </div>
              </th>
            ))}
          </tr>
        </thead>
        <tbody>
          {rows.map((row, i) => (
            <tr key={i} className={clsx(i === 0 ? 'bg-[#a3cdf0] text-[#111]' : i % 2 ? 'bg-[#f3f3f3]' : 'bg-white')}>
              <Selector current={i === 0} />
              <td className={clsx(cell, 'text-right', i === 0 && 'bg-white outline-2 -outline-offset-1 outline-[#f0cb4e]')}>
                {i === 0 ? <span className="mr-px inline-block h-[14px] bg-black leading-[14px] text-white">{row.ref}</span> : <span className="mr-px">{row.ref}</span>}
              </td>
              <td className={clsx(cell, 'pl-[3px]')}>{row.tipo}</td>
              <td className={cell} />
              <td className={clsx(cell, 'pr-[6px] text-right')}>{row.precio}</td>
              <td className={clsx(cell, 'pr-1 text-right')}>{row.sup}</td>
              <td className={cell} />
              <td className={clsx(cell, 'pl-[3px]')}>{row.terraza}</td>
              <td className={cell}><CheckCell label={`Vendido, fila ${i + 1}`} checked={row.vendido} /></td>
            </tr>
          ))}
          <tr className="bg-[#f3f3f3]">
            <Selector>
              <Svg w={9} h={9} className="mx-auto"><path d="M4.500 0v9M0 4.500h9M1.500 1.500l6 6M7.500 1.500l-6 6" stroke="#111" /></Svg>
            </Selector>
            {columns.slice(1).map((name) => (
              <td key={name} className={cell} />
            ))}
            <td className={cell}><CheckCell label="Vendido, fila nueva" checked={false} /></td>
          </tr>
        </tbody>
        <tfoot className="leading-[14px] font-bold">
          <tr>
            <Selector />
            <td className={clsx(cell, 'border-t text-right')}><span className="mr-px">3</span></td>
            <td className={clsx(cell, 'border-t')} />
            <td className={clsx(cell, 'border-t')} />
            <td className={clsx(cell, 'border-t pr-[6px] text-right')}>276.700 €</td>
            <td className={clsx(cell, 'border-t pr-1 text-right')}>104</td>
            <td className={clsx(cell, 'border-t')} />
            <td className={clsx(cell, 'border-t')} />
            <td className={clsx(cell, 'border-t')} />
          </tr>
        </tfoot>
      </table>
      <div className="flex flex-1">
        <div className="w-[19px] border-r border-[#f0f1f5] bg-[#f5f5ff]/80" />
        {fillerWidths.map((width, i) => (
          <div key={i} className={clsx('border-r border-[#f0f1f5]', width)} />
        ))}
      </div>
    </div>
    <div className="flex flex-1 flex-col">
      <div className="h-4 bg-[#f5f5ff]" />
      <div className="flex flex-1">
        <div className="w-[94px] border-r border-[#f0f1f5]" />
        <div className="w-[94px] border-r border-[#f0f1f5]" />
        <div className="w-[94px] border-r border-[#f0f1f5]" />
      </div>
    </div>
  </div>
);

const NavArrow = ({ label, d, off }: { label: string; d: string; off?: boolean }) => (
  <button type="button" aria-label={label} className="flex w-[17px] justify-center">
    <Svg w={9} h={8}><path d={d} fill={off ? '#bbb' : '#333'} /></Svg>
  </button>
);

const RecordBar = () => (
  <div className="flex h-[19px] shrink-0 items-center border border-[#a0a6af] bg-linear-to-b from-[#f6f7f8] from-50% to-[#e6e8eb] to-50% pl-1 text-[#3b3b3b]">
    <label htmlFor="record" className="mr-[2px]">Registro:</label>
    <NavArrow label="Primer registro" d="M1 0h1.500v7H1zM8 0v7L3.500 3.500z" />
    <NavArrow label="Registro anterior" d="M7 0v7L3 3.500z" off />
    <input id="record" defaultValue="1 de 9" className="mr-[2px] h-[15px] w-[50px] border border-[#dcdfe4] bg-white px-px text-black" />
    <NavArrow label="Registro siguiente" d="M3 0v7L7 3.500z" />
    <NavArrow label="Último registro" d="M1 0v7l4.500-3.500zM6.500 0H8v7H6.500z" />
    <button type="button" aria-label="Nuevo registro" className="flex w-[18px] justify-center">
      <Svg w={14} h={9}>
        <path d="M1 1v7l4.500-3.500z" fill="#333" />
        <path d="M10 0v9M6 4.500h8M7 1.500l6 6M13 1.500l-6 6" stroke="#eab308" strokeWidth="1.200" />
      </Svg>
    </button>
    <div className="ml-[3px] flex h-full items-center gap-1 border-x border-[#c3c7cd] px-[7px] text-[#9a9a9a]">
      <Funnel light extra="x" />
      Sin filtro
    </div>
    <input aria-label="Buscar" defaultValue="Buscar" className="ml-[5px] h-[15px] w-[70px] border border-[#dcdfe4] bg-white px-px text-black" />
  </div>
);

/* ---------- status bar and taskbar ---------- */

const viewIcons = [
  { label: 'Vista Tabla dinámica', d: 'M5.500 1.500h6v4h-6zM1.500 5.500h10v5h-10zM5.500 1.500v9M8.500 1.500v9M1.500 8h10M9 12h4M11 8v4' },
  { label: 'Vista Gráfico dinámico', d: 'M1.500 11.500v-6h3v6M4.500 11.500v-9h3v9M7.500 5.500h3v6h-9M10.500 8.500h2v3h-2' },
  { label: 'Vista Diseño', d: 'M1 1l4 5M12 1L5 8M1.500 7v5h10M3 10h8M4.500 12V9M7.500 12V9' },
];

const StatusBar = () => (
  <footer className="flex h-[22px] shrink-0 items-center border-t border-[#f1f3f5] bg-linear-to-b from-[#dcdfe3] to-[#b9bdc2] pr-[3px] text-[#444]">
    <span className="w-1/2 pl-2">Vista Hoja de datos</span>
    <span className="h-[18px] w-px bg-[#8e959e]" />
    <span className="flex-1 pr-[10px] text-right">Bloq Num</span>
    <span className="mr-1 h-[18px] w-px bg-[#8e959e]" />
    <button type="button" aria-label="Vista Hoja de datos" className="flex h-[19px] w-[19px] items-center justify-center rounded-[2px] border border-[#c28a1d] bg-[#ffe184]">
      <Svg w={13} h={12}>
        <path d="M.5 1.500h12v9H.5z" fill="#fff" stroke="#444" />
        <path d="M0 2h13" stroke="#444" strokeWidth="2" />
        <path d="M4 3v8M6 5.500h2m1 0h2M6 8.500h2m1 0h2M1.500 5h2M1.500 7h2" stroke="#555" />
      </Svg>
    </button>
    {viewIcons.map((icon) => (
      <button key={icon.label} type="button" aria-label={icon.label} className="flex w-[18px] justify-center">
        <Svg w={13} h={13}><path d={icon.d} fill="none" stroke="#555" strokeWidth="1.200" /></Svg>
      </button>
    ))}
  </footer>
);

const OfficeIcon = ({ letter, color, light }: { letter: string; color: string; light: string }) => (
  <Svg w={23} h={22}>
    <path d="M2 .5h20v21H1V3z" fill={light} stroke={color} />
    <path d="M2 3l19-2v8L2 20z" fill="#fff" opacity=".75" />
    <text x="8.500" y="16" fontSize="17" fontWeight="700" textAnchor="middle" fill={color} fontFamily="Noto Sans, sans-serif">{letter}</text>
    <path d="M12 14l9-3 1 9-9 1z" fill="#fff" stroke={color} strokeWidth=".6" />
    <path d="M14 15.500l6-2M14 17.500l6-1.500M14 19.500l6-1" stroke={color} strokeWidth=".7" />
  </Svg>
);

const apps: { name: string; active?: boolean; icon: ReactNode }[] = [
  {
    name: 'Explorador de archivos',
    icon: (
      <Svg w={22} h={19}>
        <path d="M0 1h8l1.500 2H21v4H0z" fill="#e8b740" />
        <path d="M0 4h22v15H0z" fill="#fde08d" />
        <path d="M4 19v-8h14v8h-3.500v-4.500h-7V19z" fill="#38a9e4" />
      </Svg>
    ),
  },
  {
    name: 'Internet Explorer',
    icon: (
      <Svg w={24} h={24}>
        <path d="M19 17A7.500 7.500 0 1 1 20 12.500" fill="none" stroke="#4fbff2" strokeWidth="4" />
        <path d="M6 13.500h16" stroke="#4fbff2" strokeWidth="3" />
        <path d="M21.500 7c2-8-13-4-18.500 8-3 8 3 8 7 5.500" fill="none" stroke="#f5c93a" strokeWidth="1.900" />
      </Svg>
    ),
  },
  {
    name: 'Google Chrome',
    icon: (
      <Svg w={22} h={22}>
        <circle cx="11" cy="11" r="11" fill="#fbc116" />
        <path d="M1.500 5.500A11 11 0 0 1 20.500 5.500H11L6 13.500z" fill="#dd4b3e" />
        <path d="M1.500 5.500A11 11 0 0 0 10 22l5-8.500H6.500z" fill="#1b9e58" />
        <circle cx="11" cy="11" r="5.200" fill="#fff" />
        <circle cx="11" cy="11" r="4.200" fill="#4688f1" />
      </Svg>
    ),
  },
  { name: 'PowerPoint', icon: <OfficeIcon letter="P" color="#d1491b" light="#f08a5a" /> },
  { name: 'Word', icon: <OfficeIcon letter="W" color="#1f4fa3" light="#7da4e0" /> },
  { name: 'Excel', icon: <OfficeIcon letter="X" color="#2c8636" light="#7fc383" /> },
  { name: 'Access', active: true, icon: <OfficeIcon letter="A" color="#b01455" light="#e069a0" /> },
  {
    name: 'Paint',
    icon: (
      <Svg w={24} h={24}>
        <path d="M11 6c7-2 12 3 10 9-1 4-5 5-8 4-2 4-9 3-11-1C-.5 12 5 7 11 6z" fill="#c5dcf0" stroke="#7fa3c6" />
        <circle cx="6" cy="13" r="2" fill="#d9463b" />
        <circle cx="10" cy="9" r="2" fill="#5aa83f" />
        <circle cx="15" cy="9" r="1.800" fill="#e9c43a" />
        <circle cx="9" cy="17" r="1.800" fill="#222" />
        <path d="M20 4l-7 19" stroke="#d98a33" strokeWidth="2.500" />
        <path d="M18 1l5-1-1 6-3 1z" fill="#a3763f" />
      </Svg>
    ),
  },
];

const Taskbar = () => (
  <div className="flex h-10 shrink-0 items-center justify-between bg-[#01040a] text-white">
    <div className="flex h-full items-center">
      <button type="button" aria-label="Inicio" className="flex w-12 justify-center">
        <Svg w={17} h={17}>
          <path d="M0 2.500l7-1V8H0zM8 1.300L17 0v8H8zM0 9h7v6.500l-7-1zM8 9h9v8l-9-1.300z" fill="#fff" />
        </Svg>
      </button>
      <button type="button" aria-label="Vista de tareas" className="mr-[3px] flex w-12 justify-center">
        <Svg w={20} h={15}>
          <path d="M4.500.5h11v14h-11zM3 2.500H.5v10H3M17 2.500h2.500v10H17" fill="none" stroke="#fff" strokeWidth="1.200" />
        </Svg>
      </button>
      {apps.map((app) => (
        <button
          key={app.name}
          type="button"
          aria-label={app.name}
          className={clsx('flex h-full w-[49px] items-center justify-center', app.active && 'border-b-2 border-[#76b9ed] bg-[#333539]')}
        >
          {app.icon}
        </button>
      ))}
    </div>
    <div className="flex h-full items-center">
      <button type="button" aria-label="Contactos" className="mr-[22px]">
        <Svg w={16} h={16}>
          <path d="M1 15c0-6 6.500-6 7 0M8 8c1-3.500 6.500-3.500 6.500 1" fill="none" stroke="#fff" strokeWidth="1.200" />
          <circle cx="4.500" cy="8" r="2.300" fill="none" stroke="#fff" strokeWidth="1.200" />
          <circle cx="11" cy="3.300" r="2.500" fill="none" stroke="#fff" strokeWidth="1.200" />
        </Svg>
      </button>
      <button type="button" aria-label="Mostrar iconos ocultos" className="mr-3">
        <Svg w={12} h={8}><path d="M.5 7L6 1.500 11.500 7" fill="none" stroke="#fff" strokeWidth="1.300" /></Svg>
      </button>
      <button type="button" aria-label="Red" className="mr-2">
        <Svg w={13} h={13}>
          <path d="M1 12.500C1 6 6 1 12.500 1M4 12.500C4 8 8 4 12.500 4M7 12.500C7 9.500 9.500 7 12.500 7" fill="none" stroke="#ccc" />
          <circle cx="11" cy="11" r="1.800" fill="#fff" />
        </Svg>
      </button>
      <button type="button" aria-label="Volumen" className="mr-2">
        <Svg w={17} h={14}>
          <path d="M.5 4.500h2.500L6.500 1v12L3 9.500H.5zM9 5c1 1 1 3 0 4M11.500 3c2 2 2 6 0 8M13.500 1c3.300 3 3.300 9 0 12" fill="none" stroke="#fff" />
        </Svg>
      </button>
      <time className="mr-4 w-[60px] text-center leading-[18px]" dateTime="2018-03-14T17:22">
        17:22
        <br />
        14/03/2018
      </time>
      <button type="button" aria-label="Notificaciones" className="mr-5">
        <Svg w={17} h={16}><path d="M.5.500h16v12H11L8.500 15 6 12.500H.5z" fill="none" stroke="#fff" strokeWidth="1.200" /></Svg>
      </button>
      <span className="mr-1 h-full w-px bg-[#555]" />
    </div>
  </div>
);

const App = () => (
  <div className="flex h-screen flex-col overflow-hidden bg-[#acb3bf] font-['Open_Sans','Noto_Sans',sans-serif] text-[11px] leading-4">
    <Header />
    <Ribbon />
    <main className="flex min-h-0 flex-1 border-t-2 border-[#d9dde3] pl-1">
      <NavigationPane />
      <div className="w-[5px] shrink-0 border-r-2 border-[#8e959e] bg-[#e6e8ec]" />
      <div className="flex min-w-0 flex-1 flex-col">
        <DocumentTabs />
        <Datasheet />
        <RecordBar />
      </div>
    </main>
    <StatusBar />
    <Taskbar />
  </div>
);

export default App;
